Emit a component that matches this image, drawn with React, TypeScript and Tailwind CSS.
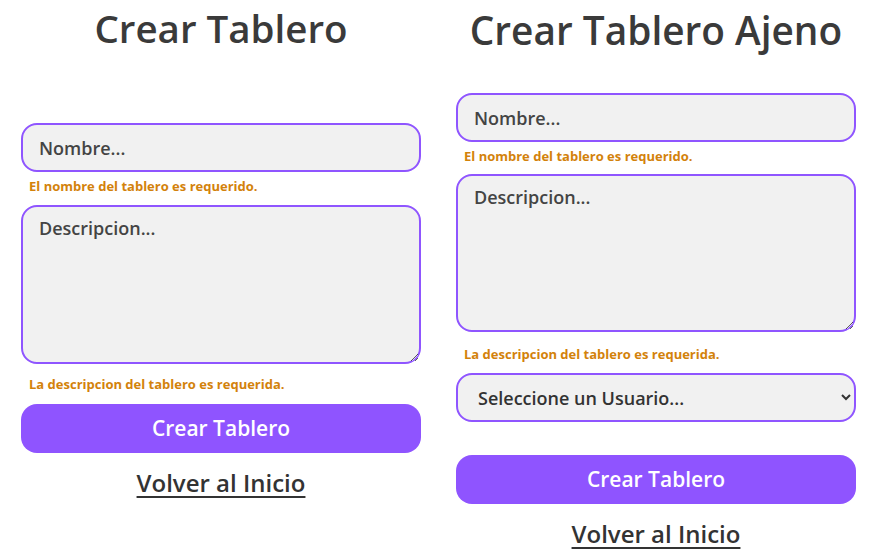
const font = { fontFamily: '"Open Sans", "Noto Sans", sans-serif' }

function ErrorText({ children, className = '' }: { children: string; className?: string }) {
  return (
    <p className={`px-2 text-[13px] font-bold leading-5 text-[#d3820b] ${className}`}>{children}</p>
  )
}

function Field({ placeholder }: { placeholder: string }) {
  return (
    <input
      type="text"
      placeholder={placeholder}
      className="block h-[49px] w-full rounded-2xl border-2 border-[#8f55ff] bg-[#f1f1f1] px-4 text-lg font-semibold text-[#444] outline-none placeholder:text-[#444]"
    />
  )
}

function Area({ placeholder, height }: { placeholder: string; height: string }) {
  return (
    <textarea
      placeholder={placeholder}
      className={`block w-full rounded-2xl border-2 border-[#8f55ff] bg-[#f1f1f1] px-4 pt-[7px] pb-3 text-lg font-semibold text-[#444] outline-none placeholder:text-[#444] ${height}`}
    />
  )
}

function SubmitButton() {
  return (
    <button
      type="button"
      className="block h-[49px] w-full rounded-2xl bg-[#8f54ff] text-[21px] font-semibold text-white"
    >
      Crear Tablero
    </button>
  )
}

function BackLink({ className = '' }: { className?: string }) {
  return (
    <a href="#" className={`block text-center text-2xl leading-8 font-semibold text-[#333] underline underline-offset-4 ${className}`}>
      Volver al Inicio
    </a>
  )
}

export default function App() {
  return (
    <div style={font} className="flex h-[560px] w-[879px] gap-[35px] bg-white px-[21px]">
      <div className="w-[400px]">
        <h1 className="mt-[4px] text-center text-[38.5px] leading-[48px] font-semibold text-[#3a3a3a]">Crear Tablero</h1>
        <div className="mt-[71px]">
          <Field placeholder="Nombre..." />
          <ErrorText className="mt-[4px] mb-[9px]">El nombre del tablero es requerido.</ErrorText>
          <Area placeholder="Descripcion..." height="h-[159px]" />
          <ErrorText className="my-[10px]">La descripcion del tablero es requerida.</ErrorText>
          <SubmitButton />
          <BackLink className="mt-[14px]" />
        </div>
      </div>

      <div className="w-[400px]">
        <h1 className="mt-[6px] text-center text-[38.8px] leading-[48px] font-semibold text-[#3a3a3a]">Crear Tablero Ajeno</h1>
        <div className="mt-[39px]">
          <Field placeholder="Nombre..." />
          <ErrorText className="mt-[4px] mb-[8px]">El nombre del tablero es requerido.</ErrorText>
          <Area placeholder="Descripcion..." height="h-[158px]" />
          <ErrorText className="mt-[12px] mb-[9px]">La descripcion del tablero es requerida.</ErrorText>
          <select className="block h-[49px] w-full rounded-2xl border-2 border-[#8f55ff] bg-[#f1f1f1] px-4 text-lg font-semibold text-[#333] outline-none">
            <option>Seleccione un Usuario...</option>
          </select>
          <div className="mt-[33px]">
            <SubmitButton />
          </div>
          <BackLink className="mt-[14px]" />
        </div>
      </div>
    </div>
  )
}
